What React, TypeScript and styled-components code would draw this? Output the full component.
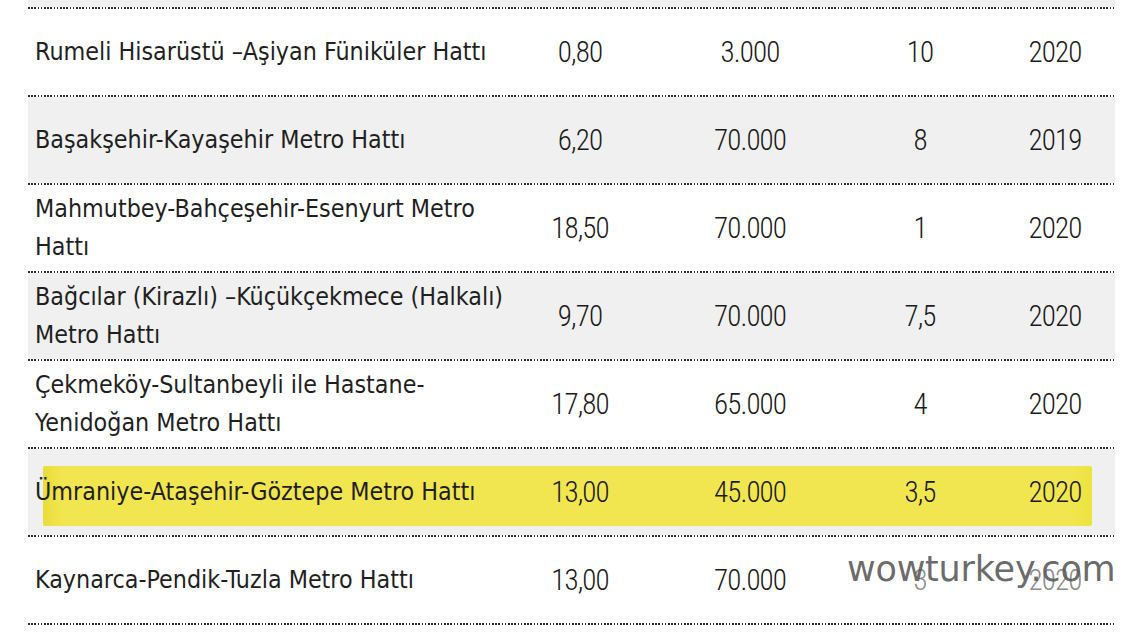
import styled, { createGlobalStyle } from 'styled-components';

const GlobalStyle = createGlobalStyle`
  * {
    box-sizing: border-box;
    margin: 0;
    padding: 0;
  }

  body {
    background: #fff;
    font-family: 'DejaVu Sans Condensed', 'DejaVu Sans', sans-serif;
    color: #222;
    overflow: hidden;
  }
`;

const Page = styled.div`
  position: relative;
  width: 1144px;
  height: 634px;
`;

const Table = styled.div`
  margin-left: 28px;
  width: 1087px;
`;

const Stub = styled.div`
  height: 7px;
  background: #f0f0f0;
`;

const Divider = styled.div`
  height: 2px;
  background-image: repeating-linear-gradient(90deg, #2a2a2a 0 1.6px, transparent 1.6px 3.2px);
`;

const Row = styled.div<{ $shaded?: boolean; $marked?: boolean }>`
  position: relative;
  display: grid;
  grid-template-columns: 477px 150px 190px 150px 120px;
  align-items: center;
  height: 86px;
  background: ${p => (p.$shaded ? '#f0f0f0' : '#fff')};

  ${p =>
    p.$marked &&
    `
    &::before {
      content: '';
      position: absolute;
      left: 15px;
      right: 23px;
      top: 17px;
      bottom: 9px;
      background: linear-gradient(90deg, #e9dc3a 0, #f1e64f 20px, #f1e64f calc(100% - 20px), #ece33c 100%);
      border-radius: 2px;
      filter: blur(0.6px);
    }
  `}
`;

const Name = styled.div`
  position: relative;
  padding-left: 7px;
  font-size: 24.8px;
  line-height: 38px;
  white-space: nowrap;
  color: #1f1f1f;
`;

const Num = styled.div<{ $faded?: boolean }>`
  position: relative;
  text-align: center;
  font-family: 'Roboto Condensed', 'DejaVu Sans Condensed', sans-serif;
  font-weight: 300;
  font-size: 29px;
  letter-spacing: -0.9px;
  color: ${p => (p.$faded ? '#8c8c8c' : '#1a1a1a')};
`;

const Watermark = styled.div`
  position: absolute;
  left: 847px;
  top: 549px;
  font-family: 'DejaVu Sans', sans-serif;
  font-size: 35px;
  letter-spacing: -0.2px;
  color: rgba(88, 88, 88, 0.9);
`;

type Line = {
  name: string[];
  km: string;
  cap: string;
  min: string;
  year: string;
};

const lines: Line[] = [
  { name: ['Rumeli Hisarüstü –Aşiyan Füniküler Hattı'], km: '0,80', cap: '3.000', min: '10', year: '2020' },
  { name: ['Başakşehir-Kayaşehir Metro Hattı'], km: '6,20', cap: '70.000', min: '8', year: '2019' },
  { name: ['Mahmutbey-Bahçeşehir-Esenyurt Metro', 'Hattı'], km: '18,50', cap: '70.000', min: '1', year: '2020' },
  { name: ['Bağcılar (Kirazlı) –Küçükçekmece (Halkalı)', 'Metro Hattı'], km: '9,70', cap: '70.000', min: '7,5', year: '2020' },
  { name: ['Çekmeköy-Sultanbeyli ile Hastane-', 'Yenidoğan Metro Hattı'], km: '17,80', cap: '65.000', min: '4', year: '2020' },
  { name: ['Ümraniye-Ataşehir-Göztepe Metro Hattı'], km: '13,00', cap: '45.000', min: '3,5', year: '2020' },
  { name: ['Kaynarca-Pendik-Tuzla Metro Hattı'], km: '13,00', cap: '70.000', min: '3', year: '2020' },
];

const App: React.FC = () => {
  return (
    <>
      <GlobalStyle />
      <Page>
        <Table>
          <Stub />
          <Divider />
          {lines.map((l, i) => {
            const last = i === lines.length - 1;
            return (
              <div key={l.name[0]}>
                <Row $shaded={i % 2 === 1} $marked={i === 5}>
                  <Name>
                    {l.name.map(n => (
                      <div key={n}>{n}</div>
                    ))}
                  </Name>
                  <Num>{l.km}</Num>
                  <Num>{l.cap}</Num>
                  <Num $faded={last}>{l.min}</Num>
                  <Num $faded={last}>{l.year}</Num>
                </Row>
                <Divider />
              </div>
            );
          })}
        </Table>
        <Watermark>wowturkey.com</Watermark>
      </Page>
    </>
  );
};

export default App;
